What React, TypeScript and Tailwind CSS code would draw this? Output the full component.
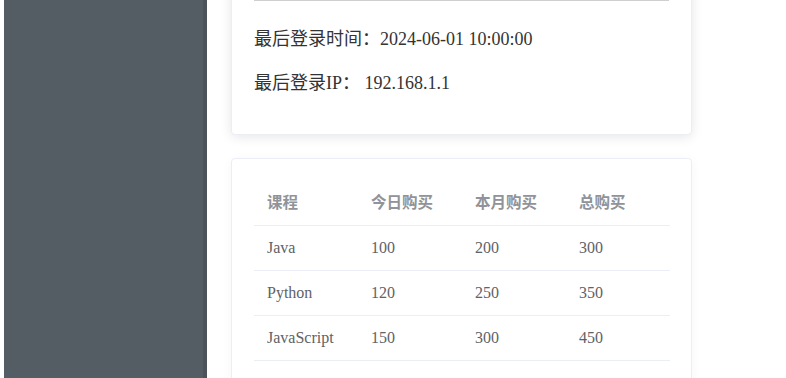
const FONT = "font-['Liberation_Serif','Noto_Sans_CJK_SC',serif]";

type Row = { course: string; today: number; month: number; total: number };

const ROWS: Row[] = [
  { course: "Java", today: 100, month: 200, total: 300 },
  { course: "Python", today: 120, month: 250, total: 350 },
  { course: "JavaScript", today: 150, month: 300, total: 450 },
];

const HEADERS = ["课程", "今日购买", "本月购买", "总购买"];

function Sidebar() {
  return <aside className="w-[203px] shrink-0 bg-[#545c64] border-r-4 border-[#4c535a]" />;
}

function LoginCard() {
  return (
    <div className="mt-[-21px] w-[461px] rounded border border-[#ebeef5] bg-white px-[22px] pt-5 pb-[19px] shadow-[0_2px_12px_rgba(0,0,0,0.1)]">
      <div className="h-px bg-[#cfcfcf]" />
      <p className="mt-[26px] text-[18px] leading-6 text-[#333]">最后登录时间：2024-06-01 10:00:00</p>
      <p className="mt-5 mb-5 text-[18px] leading-6 text-[#333]">最后登录IP： 192.168.1.1</p>
    </div>
  );
}

function PurchaseTable() {
  return (
    <div className="mt-[23px] w-[461px] rounded border border-[#ebeef5] bg-white px-[22px] pt-[21px] pb-5 shadow-[0_2px_12px_rgba(0,0,0,0.04)]">
      <table className="w-[416px] table-fixed border-collapse">
        <thead>
          <tr className="border-b border-[#ebeef5]">
            {HEADERS.map((h) => (
              <th key={h} className="h-[45px] pl-[13px] text-left text-[15.5px] font-bold text-[#909399]">
                {h}
              </th>
            ))}
          </tr>
        </thead>
        <tbody>
          {ROWS.map((r) => (
            <tr key={r.course} className="border-b border-[#ebeef5]">
              <td className="h-[45px] pl-[13px] text-[16px] text-[#606266]">{r.course}</td>
              <td className="h-[45px] pl-[13px] text-[16px] text-[#606266]">{r.today}</td>
              <td className="h-[45px] pl-[13px] text-[16px] text-[#606266]">{r.month}</td>
              <td className="h-[45px] pl-[13px] text-[16px] text-[#606266]">{r.total}</td>
            </tr>
          ))}
        </tbody>
      </table>
    </div>
  );
}

export default function App() {
  return (
    <div className={`flex h-[378px] w-[786px] overflow-hidden bg-white pl-1 ${FONT}`}>
      <Sidebar />
      <main className="flex flex-col pl-6">
        <LoginCard />
        <PurchaseTable />
      </main>
    </div>
  );
}
